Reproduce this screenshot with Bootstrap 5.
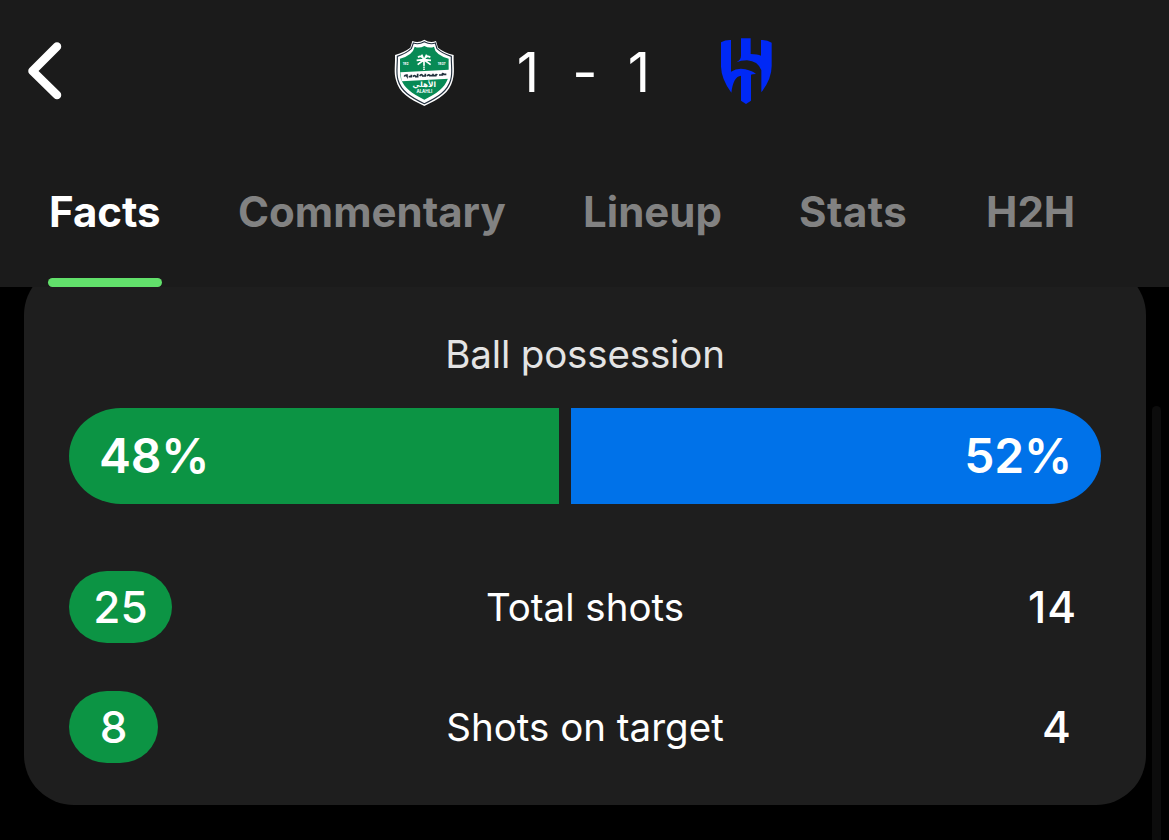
<!DOCTYPE html>
<html lang="en">
<head>
<meta charset="utf-8">
<meta name="viewport" content="width=device-width, initial-scale=1">
<title>Match facts</title>
<link href="https://cdn.jsdelivr.net/npm/bootstrap@5.3.0/dist/css/bootstrap.min.css" rel="stylesheet">
<style>
body{background:#000;color:#fff;font-family:Inter,"Liberation Sans",sans-serif;height:840px;overflow:hidden}
.match-header{background:#1b1b1b;height:287px}
.score-row{height:145px;padding-left:20px}
.back-btn{width:50px;height:73px}
.crest{width:80px;height:85px}
.c1{margin-left:315px}
.c2{margin-left:38px}
.score{font-size:55px;line-height:60px;width:167px;margin-left:35px;padding-bottom:1px}
.score span{width:56px;flex:none;text-align:center}
.score .dash{width:55px;padding-left:3px}
.tabs{height:142px;padding-left:48px}
.tabs .nav-link{color:#828282;font-size:42px;font-weight:700;line-height:50px;padding:42px 0 0 1px;height:142px;white-space:nowrap;position:relative}
.tabs .nav-link.active{color:#fff}
.tabs .nav-link.active::after{content:"";position:absolute;left:0;bottom:0;width:114px;height:9px;border-radius:5px;background:#62e06b}
.t1{width:189px}.t2{width:345px}.t3{width:216px}.t4{width:187px;letter-spacing:.4px}
.content{height:553px;position:relative}
.stats-card{background:#1e1e1e;border-radius:50px;margin:-22px 23px 0 24px;height:540px;padding:63px 45px 0}
.label{font-size:38.5px;line-height:52px}
.label-title{color:#e4e4e4;letter-spacing:-.15px}
.possession{height:96px;margin-top:28px;gap:12px;font-size:48px;font-weight:600}
.home{background:#0c9444}
.possession .home{border-radius:52px 0 0 52px/48px 0 0 48px;padding-left:30px}
.possession .away{background:#0072e9;border-radius:0 52px 52px 0/0 48px 48px 0;padding-right:29px}
.possession span{letter-spacing:-.2px}
.stat-row{height:72px}
.num{font-size:44px;font-weight:500;height:72px}
.num.home{border-radius:38px/36px}
.w2{width:103px}.w1{width:89px}
.away-two{letter-spacing:1px;padding-left:6px}
.scroll-thumb{position:absolute;right:8px;top:119px;width:9px;height:500px;border-radius:5px;background:#0c0c0c}
</style>
</head>
<body>
<header class="match-header">
  <div class="score-row d-flex align-items-center">
    <a class="back-btn" href="#" aria-label="Back"><svg class="d-block" width="50" height="70" viewBox="0 0 50 70"><path d="M37 10.500 12.500 35 37 59" fill="none" stroke="#fff" stroke-width="8.500" stroke-linecap="round" stroke-linejoin="round"/></svg></a>
    <svg class="crest c1" viewBox="0 0 240 255">
      <path d="M118 29Q135 40 153 33L159 53Q176 67 206 75C205 105 210 127 203 151C194 188 164 207 118 228C72 207 42 188 33 151C26 127 31 105 30 75Q59 66 76 53L82 33Q101 40 118 29Z" fill="#fff"/>
      <path d="M118 35Q136 45 151 39L156 56Q172 71 199 79C198 105 204 127 197 150C188 183 160 201 118 221C76 201 48 183 39 150C32 127 38 105 37 79Q63 71 79 56L85 39Q101 45 118 35Z" fill="#fff" stroke="#22303f" stroke-width="3.500"/>
      <path d="M118 48Q134 56 147 50Q150 74 191 86C190 105 193 127 188 148C178 174 157 190 118 209C79 190 58 174 48 148C43 127 46 105 45 86Q84 75 89 50Q103 56 118 48Z" fill="#078a55"/>
      <path d="M46 127 192 119V146L50 154Z" fill="#fff"/>
      <path d="M58 140q3-8 8-1v-6m5 7h8v-6m5 6q6-7 8 0h6v-9m6 7q6-8 9 0h8v-7m5 7q6-6 8-1h8m2-6v6h8q0-6 5-2m5 0h10q-1-8 5-2h7" fill="none" stroke="#20313c" stroke-width="5"/>
      <path d="M117 87V120M117 89C110 76 103 78 99 82M117 89C124 76 131 78 136 82M116 89 95 91M118 89 138 91M116 90 98 104M118 90 137 104M116 88 110 74M118 88 125 74" fill="none" stroke="#fff" stroke-width="5"/>
      <path d="M112 109h10M112 115h10" stroke="#078a55" stroke-width="2"/>
      <g fill="#fff" font-family="Inter,sans-serif" font-weight="700" text-anchor="middle"><text x="62" y="104" font-size="10">192</text><text x="170" y="104" font-size="10">1937</text><text x="118" y="171" font-size="22" font-family="DejaVu Sans,sans-serif">الأهلي</text><text x="118" y="188" font-size="13">ALAHLI</text></g>
    </svg>
    <div class="score d-flex"><span>1</span><span class="dash">-</span><span>1</span></div>
    <svg class="crest c2" viewBox="0 0 240 255">
      <g fill="#0029f5"><path d="M48 37Q62 29 78 30V125Q97 113 121 118Q143 123 153 132Q141 132 138 134V212L123 222 108 212V137Q85 139 79 188Q49 147 48 110Z"/><path d="M108 25H137V72Q158 73 168 77V30Q185 28 200 38V108Q200 147 169 187V121Q159 93 126 91Q108 91 94 97Q108 89 108 77Z"/></g>
    </svg>
  </div>
  <nav class="tabs nav flex-nowrap">
    <a class="nav-link active t1" href="#">Facts</a><a class="nav-link t2" href="#">Commentary</a><a class="nav-link t3" href="#">Lineup</a><a class="nav-link t4" href="#">Stats</a><a class="nav-link" href="#">H2H</a>
  </nav>
</header>
<main class="content overflow-hidden">
  <section class="stats-card">
    <div class="label label-title text-center">Ball possession</div>
    <div class="possession d-flex">
      <div class="home d-flex align-items-center" style="width:490px"><span>48%</span></div>
      <div class="away d-flex align-items-center justify-content-end" style="width:530px"><span>52%</span></div>
    </div>
    <div class="stat-row d-flex align-items-center justify-content-between" style="margin-top:67px">
      <div class="num home w2 d-flex align-items-center justify-content-center">25</div>
      <div class="label">Total shots</div>
      <div class="num w2 away-two d-flex align-items-center justify-content-center">14</div>
    </div>
    <div class="stat-row d-flex align-items-center justify-content-between mt-5">
      <div class="num home w1 d-flex align-items-center justify-content-center">8</div>
      <div class="label">Shots on target</div>
      <div class="num w1 d-flex align-items-center justify-content-center">4</div>
    </div>
  </section>
  <div class="scroll-thumb"></div>
</main>
<script src="https://cdn.jsdelivr.net/npm/bootstrap@5.3.0/dist/js/bootstrap.bundle.min.js"></script>
</body>
</html>
